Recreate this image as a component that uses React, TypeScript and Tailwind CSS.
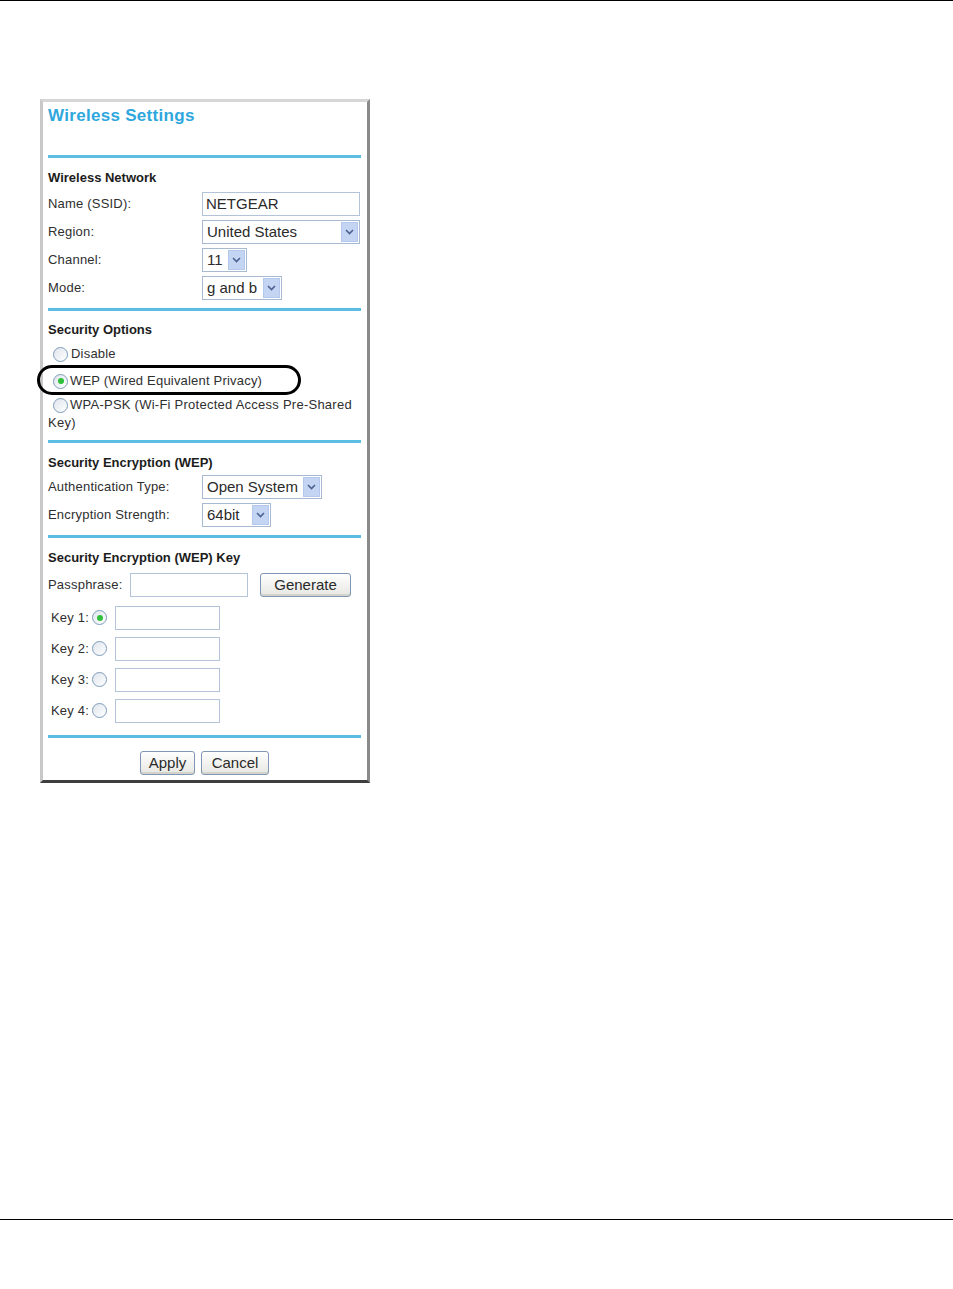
import React from "react";

const Rule = ({ className = "" }: { className?: string }) => (
  <div className={`h-[3px] bg-[#5cbde3] ${className}`} />
);

const Heading = ({ children, className = "" }: { children: React.ReactNode; className?: string }) => (
  <p className={`text-[13px] leading-4 font-bold text-[#1c1c1c] ${className}`}>{children}</p>
);

const Radio = ({ checked = false }: { checked?: boolean }) => (
  <span className="flex items-center justify-center w-[15px] h-[15px] rounded-full border border-[#7d9bbb] bg-gradient-to-br from-[#dfe5ec] to-white shrink-0">
    {checked && <span className="w-[6px] h-[6px] rounded-full bg-[#2fbf3a]" />}
  </span>
);

const Select = ({ value, width }: { value: string; width: string }) => (
  <div className={`flex items-center h-[24px] border border-[#a7bad2] bg-white pl-[4px] pr-[1px] ${width}`}>
    <span className="flex-1 text-[15px] text-[#2a2a2a] whitespace-nowrap">{value}</span>
    <span className="flex items-center justify-center w-[17px] h-[20px] bg-[#c4d5f4] border border-[#b4c8ee]">
      <svg width="9" height="6" viewBox="0 0 9 6">
        <path d="M1 1 L4.5 4.5 L8 1" fill="none" stroke="#4b6190" strokeWidth="1.6" />
      </svg>
    </span>
  </div>
);

const Input = ({ value = "", width }: { value?: string; width: string }) => (
  <div className={`flex items-center h-[24px] border border-[#b3c3d8] bg-white pl-[3px] text-[15px] text-[#2a2a2a] ${width}`}>
    {value}
  </div>
);

const Button = ({ label, width }: { label: string; width: string }) => (
  <div
    className={`flex items-center justify-center h-[24px] rounded-[3px] border border-[#7f97b4] bg-gradient-to-b from-white to-[#e6e6e2] shadow-[inset_0_-2px_0_#d3d3cc] text-[15px] text-[#2a2a2a] ${width}`}
  >
    {label}
  </div>
);

const Row = ({ label, children }: { label: string; children: React.ReactNode }) => (
  <div className="flex items-center h-[28px]">
    <span className="w-[154px] text-[13px] tracking-[0.2px] text-[#2f2f2f]">{label}</span>
    {children}
  </div>
);

const KeyRow = ({ n, checked = false }: { n: number; checked?: boolean }) => (
  <div className="flex items-center h-[31px] pl-[3px]">
    <span className="w-[41px] text-[13px] tracking-[0.2px] text-[#2f2f2f]">Key {n}:</span>
    <Radio checked={checked} />
    <span className="w-[8px]" />
    <Input width="w-[105px]" />
  </div>
);

export default function App() {
  return (
    <div className="relative flex flex-col w-[953px] h-[1289px] bg-white font-['Liberation_Sans',Arial,sans-serif]">
      <div className="h-px bg-black" />

      <div className="relative ml-[40px] mt-[98px] w-[330px] border-[3px] border-t-[#d6d6d6] border-l-[#c8c8c8] border-r-[#8a8a8a] border-b-[#3e3e3e] bg-white pl-[5px] pr-[6px]">
        <h1 className="mt-[4px] text-[17px] leading-5 font-bold tracking-[0.3px] text-[#2ea7dd]">Wireless Settings</h1>
        <Rule className="mt-[29px]" />

        <Heading className="mt-[12px]">Wireless Network</Heading>
        <div className="mt-[4px]">
          <Row label="Name (SSID):">
            <Input value="NETGEAR" width="w-[158px]" />
          </Row>
          <Row label="Region:">
            <Select value="United States" width="w-[158px]" />
          </Row>
          <Row label="Channel:">
            <Select value="11" width="w-[45px]" />
          </Row>
          <Row label="Mode:">
            <Select value="g and b" width="w-[80px]" />
          </Row>
        </div>
        <Rule className="mt-[6px]" />

        <Heading className="mt-[11px]">Security Options</Heading>
        <div className="mt-[4px] text-[13px] text-[#2f2f2f]">
          <div className="flex items-center gap-[3px] h-[24px] pl-[5px] tracking-[0.2px]">
            <Radio />
            <span>Disable</span>
          </div>
          <div className="flex items-center gap-[2px] h-[30px] pl-[5px] tracking-[0.2px]">
            <Radio checked />
            <span>WEP (Wired Equivalent Privacy)</span>
          </div>
          <div className="leading-[18px] tracking-[0.25px]">
            <div className="flex items-center gap-[2px] pl-[5px]">
              <Radio />
              <span>WPA-PSK (Wi-Fi Protected Access Pre-Shared</span>
            </div>
            <div>Key)</div>
          </div>
        </div>
        <Rule className="mt-[8px]" />

        <Heading className="mt-[12px]">Security Encryption (WEP)</Heading>
        <div className="mt-[2px]">
          <Row label="Authentication Type:">
            <Select value="Open System" width="w-[120px]" />
          </Row>
          <Row label="Encryption Strength:">
            <Select value="64bit" width="w-[69px]" />
          </Row>
        </div>
        <Rule className="mt-[6px]" />

        <Heading className="mt-[12px]">Security Encryption (WEP) Key</Heading>
        <div className="flex items-center h-[28px] mt-[5px]">
          <span className="w-[82px] text-[13px] tracking-[0.2px] text-[#2f2f2f]">Passphrase:</span>
          <Input width="w-[118px]" />
          <span className="w-[12px]" />
          <Button label="Generate" width="w-[91px]" />
        </div>
        <div className="mt-[3px]">
          <KeyRow n={1} checked />
          <KeyRow n={2} />
          <KeyRow n={3} />
          <KeyRow n={4} />
        </div>
        <Rule className="mt-[9px]" />

        <div className="flex justify-center gap-[6px] pt-[13px] pb-[5px]">
          <Button label="Apply" width="w-[55px]" />
          <Button label="Cancel" width="w-[68px]" />
        </div>

        <div className="absolute left-[-6px] top-[263px] w-[264px] h-[30px] rounded-[15px] border-[3px] border-black" />
      </div>

      <div className="mt-auto mb-[69px] h-px bg-black" />
    </div>
  );
}
